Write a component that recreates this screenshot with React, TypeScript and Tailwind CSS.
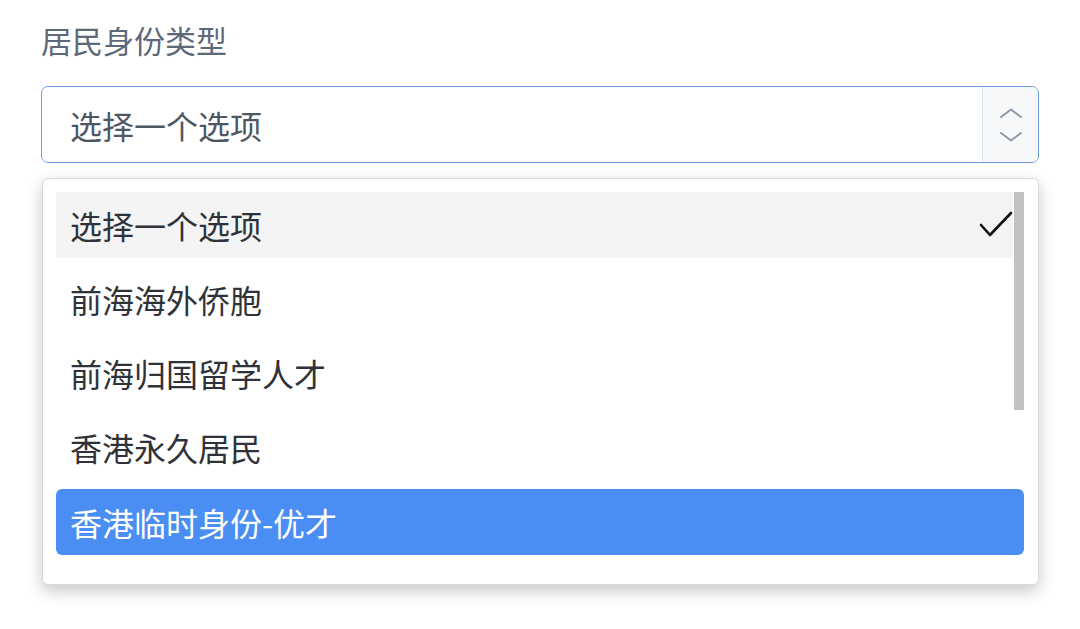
import React from "react";

const font = { fontFamily: '"Noto Sans CJK SC", "Noto Sans", sans-serif' };

const items = ["选择一个选项", "前海海外侨胞", "前海归国留学人才", "香港永久居民", "香港临时身份-优才"];

export default function App() {
  return (
    <div className="w-[1080px] h-[629px] bg-white overflow-hidden" style={font}>
      <div className="pl-[41px] pr-[41px] pt-[19px]">
        <div className="text-[31px] leading-[42px] text-[#5d6878]">居民身份类型</div>
        <div className="mt-[25px] h-[77px] flex border-[1.5px] border-[#6f9fe3] rounded-[7px] bg-white overflow-hidden">
          <div className="flex-1 flex items-center pl-[28px] text-[32px] text-[#4f5862]">选择一个选项</div>
          <div className="w-[56px] border-l border-[#dde5ef] bg-[#f7f8fa] flex flex-col items-center justify-center gap-[14px]">
            <svg width="24" height="10" viewBox="0 0 24 10" fill="none">
              <path d="M2 9 L12 1.5 L22 9" stroke="#8c99aa" strokeWidth="2" strokeLinecap="round" strokeLinejoin="round" />
            </svg>
            <svg width="24" height="10" viewBox="0 0 24 10" fill="none">
              <path d="M2 1 L12 8.5 L22 1" stroke="#8c99aa" strokeWidth="2" strokeLinecap="round" strokeLinejoin="round" />
            </svg>
          </div>
        </div>
        <div className="mt-[15px] ml-[1px] relative border border-[#d9d9d9] rounded-[6px] bg-white shadow-[0_6px_16px_rgba(0,0,0,0.22)] pt-[13px] pb-[29px] pl-[13px] pr-[14px]">
          <div className="flex flex-col gap-[8px]">
            {items.map((t, i) => (
              <div
                key={t}
                className={
                  "h-[66px] flex items-center pl-[14px] rounded-[6px] text-[32px] " +
                  (i === 0
                    ? "bg-[#f4f4f4] text-[#2f3339] rounded-none mr-[11px]"
                    : i === 4
                    ? "bg-[#4a8ef4] text-white mt-[1px]"
                    : "text-[#2f3339]")
                }
              >
                <span className="flex-1">{t}</span>
                {i === 0 && (
                  <svg width="34" height="28" viewBox="0 0 34 28" fill="none">
                    <path d="M2 14 L11 24 L32 2" stroke="#111" strokeWidth="2.6" strokeLinecap="round" strokeLinejoin="round" />
                  </svg>
                )}
              </div>
            ))}
          </div>
          <div className="absolute top-[13px] right-[14px] w-[10px] h-[218px] bg-[#c2c2c2]" />
        </div>
      </div>
    </div>
  );
}
